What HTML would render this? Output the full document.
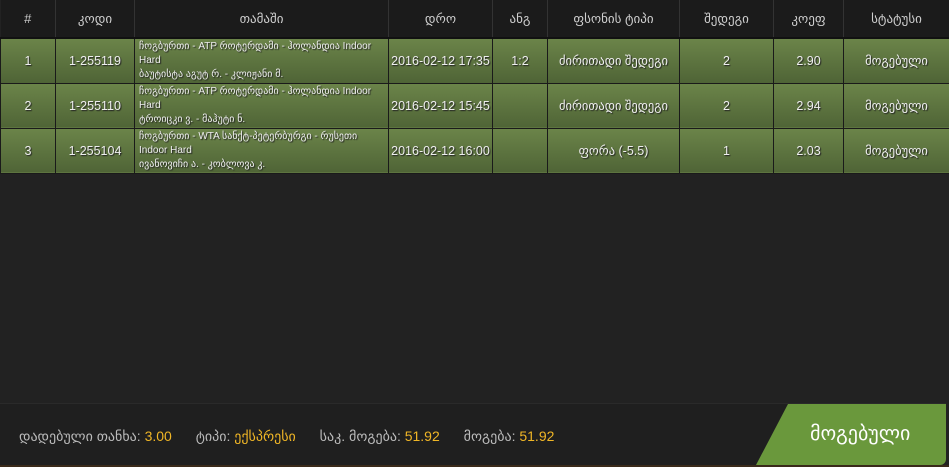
<!DOCTYPE html>
<html><head><meta charset="utf-8"><style>
*{margin:0;padding:0;box-sizing:border-box}
body{width:949px;height:467px;background:#222;overflow:hidden;position:relative;font-family:"Liberation Sans","DejaVu Sans",sans-serif;color:#e8e8e8}
table{position:absolute;left:0;top:0;width:949px;border-collapse:collapse;table-layout:fixed}
th{height:38px;background:#1b1b1b;color:#cfcfcf;font-weight:normal;font-size:13px;border-right:1px solid #333;border-bottom:2px solid #111}
td{height:45px;background:linear-gradient(#6b8449,#4f6436);font-size:12.5px;text-align:center;border:1px solid #1a1a1a;text-shadow:1px 1px 1px #222;color:#eee;white-space:nowrap}
td.g{text-align:left;font-size:10px;line-height:14px;padding:0 12px 0 4px;vertical-align:middle;white-space:normal}
.foot{position:absolute;left:0;top:403px;width:946px;height:62px;background:#1f1f1f;border-top:1px solid #2a2a2a;border-radius:0 0 6px 0}
.lbl{position:absolute;left:19px;top:24px;font-size:14px;color:#bbb;white-space:nowrap}
.lbl b{color:#f0b626;font-weight:normal;margin-right:20px}
.btn{position:absolute;left:756px;top:404px;width:190px;height:61px;background:#6a983c;clip-path:polygon(32px 0,100% 0,100% 100%,0 100%);border-radius:0 0 6px 0}
.btn span{position:absolute;left:54px;top:17px;font-size:20px;color:#fff}
.strip{position:absolute;left:0;top:465px;width:949px;height:2px;background:#3a2a1a}
</style></head><body>
<table>
<colgroup><col style="width:55px"><col style="width:79px"><col style="width:254px"><col style="width:104px"><col style="width:55px"><col style="width:132px"><col style="width:94px"><col style="width:70px"><col style="width:106px"></colgroup>
<tr><th>#</th><th>კოდი</th><th>თამაში</th><th>დრო</th><th>ანგ</th><th>ფსონის ტიპი</th><th>შედეგი</th><th>კოეფ</th><th>სტატუსი</th></tr>
<tr><td>1</td><td>1-255119</td><td class="g">ჩოგბურთი - ATP როტერდამი - ჰოლანდია Indoor Hard<br>ბაუტისტა აგუტ რ. - კლიჟანი მ.</td><td>2016-02-12 17:35</td><td>1:2</td><td>ძირითადი შედეგი</td><td>2</td><td>2.90</td><td>მოგებული</td></tr>
<tr><td>2</td><td>1-255110</td><td class="g">ჩოგბურთი - ATP როტერდამი - ჰოლანდია Indoor Hard<br>ტროიცკი ვ. - მაჰუტი ნ.</td><td>2016-02-12 15:45</td><td></td><td>ძირითადი შედეგი</td><td>2</td><td>2.94</td><td>მოგებული</td></tr>
<tr><td>3</td><td>1-255104</td><td class="g">ჩოგბურთი - WTA სანქტ-პეტერბურგი - რუსეთი Indoor Hard<br>ივანოვიჩი ა. - კობლოვა კ.</td><td>2016-02-12 16:00</td><td></td><td>ფორა (-5.5)</td><td>1</td><td>2.03</td><td>მოგებული</td></tr>
</table>
<div class="strip"></div>
<div class="foot"><div class="lbl">დადებული თანხა: <b>3.00</b> ტიპი: <b>ექსპრესი</b> საკ. მოგება: <b>51.92</b> მოგება: <b>51.92</b></div></div>
<div class="btn"><span>მოგებული</span></div>
</body></html>
